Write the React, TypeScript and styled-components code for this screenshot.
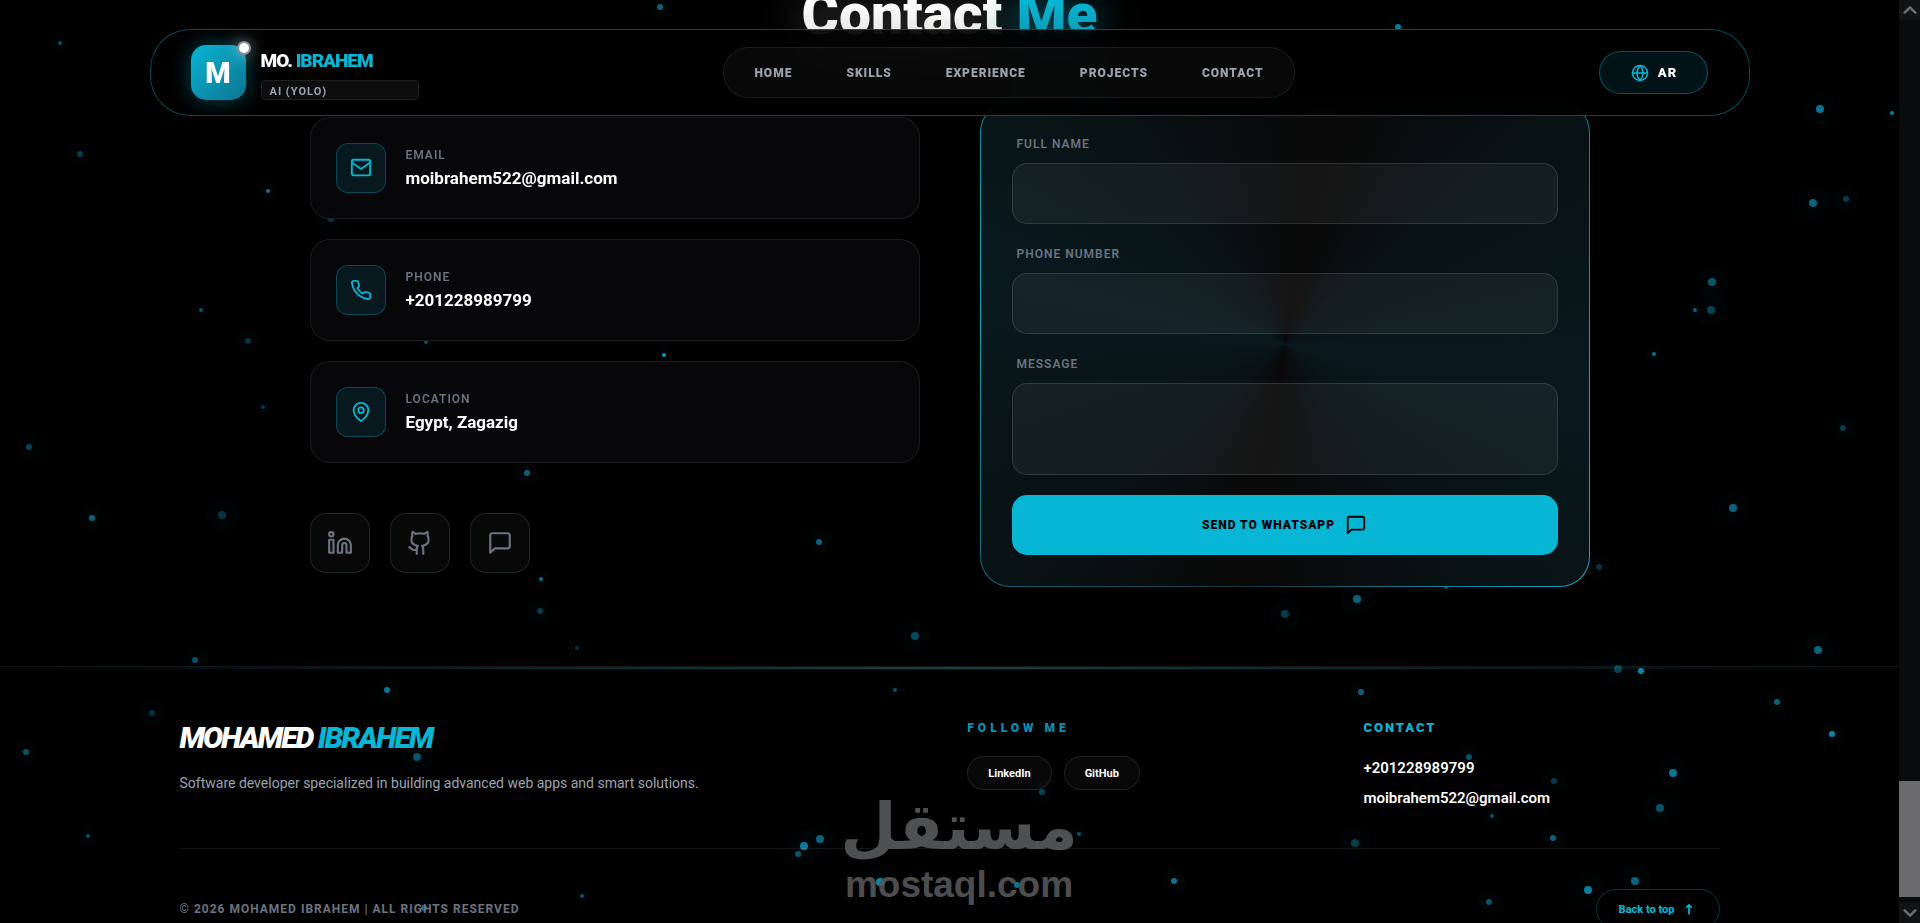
import React from 'react';
import styled, { createGlobalStyle } from 'styled-components';

const cyan = '#06b6d4';
const line = 'rgba(255, 255, 255, 0.08)';

const GlobalStyle = createGlobalStyle`
  *, *::before, *::after { box-sizing: border-box; }
  body {
    margin: 0;
    background: #000;
    color: #fff;
    font-family: Roboto, "Noto Sans", sans-serif;
    -webkit-font-smoothing: antialiased;
  }
  a { color: inherit; text-decoration: none; }
  h2, h3, p { margin: 0; }
`;

const Shell = styled.div`
  height: 100vh;
  display: grid;
  grid-template-columns: minmax(0, 1fr) 21px;
  overflow: hidden;
`;

const Page = styled.div`
  position: relative;
  height: 100vh;
  overflow: hidden;
`;

const Particles = styled.svg`
  position: absolute;
  top: 0;
  left: 0;
  pointer-events: none;
`;

/* navigation */
const Nav = styled.header`
  position: absolute;
  z-index: 2;
  top: 29px;
  left: 0;
  right: 0;
  width: calc(100% - 40px);
  max-width: 1600px;
  margin: 0 auto;
  padding: 15px 40px;
  display: flex;
  align-items: center;
  justify-content: space-between;
  border: 1px solid rgba(6, 182, 212, 0.4);
  border-radius: 40px;
  background: rgba(0, 0, 0, 0.85);
  backdrop-filter: blur(20px);
`;

const Brand = styled.a`
  display: flex;
  gap: 15px;
`;

const Mark = styled.span`
  position: relative;
  width: 55px;
  height: 55px;
  display: grid;
  place-items: center;
  border-radius: 15px;
  background: linear-gradient(135deg, ${cyan}, #0e7490);
  box-shadow: 0 0 20px rgba(6, 182, 212, 0.4);
  font-size: 29px;
  font-weight: 900;
`;

const Status = styled.span`
  position: absolute;
  top: -4px;
  right: -5px;
  width: 14px;
  height: 14px;
  border: 2px solid #8b8b9b;
  border-radius: 50%;
  background: #fff;
  box-shadow: 0 0 15px rgba(255, 255, 255, 0.5);
`;

const BrandText = styled.span`
  width: 158px;
  display: flex;
  flex-direction: column;
  justify-content: space-between;
`;

const BrandName = styled.span`
  padding-top: 4px;
  font-size: 19px;
  line-height: 24px;
  font-weight: 900;
  letter-spacing: -1px;
`;

const Accent = styled.span`
  color: ${cyan};
`;

const Role = styled.span`
  height: 20px;
  padding: 4px 8px 0;
  border: 1px solid ${line};
  border-radius: 5px;
  background: rgba(255, 255, 255, 0.05);
  color: #9ca3af;
  font-size: 11px;
  line-height: 14px;
  font-weight: 700;
  letter-spacing: 1px;
`;

const Menu = styled.nav`
  height: 51px;
  padding: 0 30px;
  display: flex;
  align-items: center;
  gap: 54px;
  border: 1px solid ${line};
  border-radius: 26px;
  background: rgba(255, 255, 255, 0.03);
`;

const MenuLink = styled.a`
  color: #9ca3af;
  font-size: 12px;
  font-weight: 900;
  letter-spacing: 1px;
`;

const Language = styled.button`
  width: 109px;
  height: 43px;
  display: flex;
  align-items: center;
  justify-content: center;
  gap: 9px;
  border: 1px solid rgba(6, 182, 212, 0.4);
  border-radius: 22px;
  background: rgba(6, 182, 212, 0.1);
  color: #fff;
  font: 900 13px Roboto, sans-serif;
  letter-spacing: 1px;
  svg { color: ${cyan}; }
`;

/* contact section */
const Contact = styled.main`
  position: relative;
  width: calc(100% - 40px);
  max-width: 1280px;
  margin: -25px auto 0;
`;

const Title = styled.h2`
  height: 127px;
  font-size: 57px;
  line-height: 80px;
  font-weight: 900;
  text-align: center;
`;

const TitleWord = styled.span<{ $glow: string; $from: string; $to: string }>`
  background: linear-gradient(180deg, ${p => p.$from} 30%, ${p => p.$to} 80%);
  background-clip: text;
  color: transparent;
  filter: drop-shadow(0 8px 20px ${p => p.$glow});
`;

const Columns = styled.div`
  display: grid;
  grid-template-columns: 1fr 1fr;
  align-items: center;
  gap: 60px;
`;

const Info = styled.div`
  display: flex;
  flex-direction: column;
  gap: 20px;
`;

const InfoCard = styled.div`
  height: 102px;
  padding: 0 25px;
  display: flex;
  align-items: center;
  gap: 20px;
  border: 1px solid ${line};
  border-radius: 20px;
  background: rgba(8, 8, 10, 0.9);
  backdrop-filter: blur(10px);
`;

const IconBox = styled.span`
  width: 50px;
  height: 50px;
  display: grid;
  place-items: center;
  border: 1px solid rgba(6, 182, 212, 0.3);
  border-radius: 12px;
  background: rgba(6, 182, 212, 0.1);
  color: ${cyan};
`;

const InfoLabel = styled.p`
  color: #6b7280;
  font-size: 12px;
  line-height: 20px;
  font-weight: 600;
  letter-spacing: 1px;
`;

const InfoValue = styled.p`
  font-size: 17px;
  line-height: 26px;
  font-weight: 700;
`;

const Socials = styled.div`
  display: flex;
  gap: 20px;
  margin-top: 30px;
`;

const SocialLink = styled.a`
  width: 60px;
  height: 60px;
  display: grid;
  place-items: center;
  border: 1px solid rgba(160, 220, 230, 0.14);
  border-radius: 16px;
  background: rgba(255, 255, 255, 0.03);
  color: #6b7280;
`;

const Form = styled.form`
  padding: 31px;
  display: flex;
  flex-direction: column;
  gap: 20px;
  border: 1px solid transparent;
  border-radius: 30px;
  background:
    conic-gradient(from 8deg, #090909, #090a0a 12deg, #081012 35deg, #08191e 90deg, #081518 115deg, #090c0d 160deg, #090909 180deg, #090a0a 192deg, #081012 215deg, #08191e 275deg, #081518 300deg, #090c0d 340deg, #090909) padding-box,
    conic-gradient(from 8deg, #164e5a, #0ea5c4 90deg, #0ea5c4 120deg, #12343c 180deg, #164e5a 210deg, #0ea5c4 270deg, #164e5a) border-box;
`;

const Field = styled.div`
  display: flex;
  flex-direction: column;
  gap: 9px;
`;

const FieldLabel = styled.label`
  padding-left: 5px;
  color: #6b7280;
  font-size: 12px;
  line-height: 20px;
  font-weight: 600;
  letter-spacing: 1px;
`;

const Input = styled.input`
  width: 100%;
  height: 61px;
  padding: 0 20px;
  border: 1px solid rgba(255, 255, 255, 0.12);
  border-radius: 15px;
  background: rgba(255, 255, 255, 0.05);
  color: #fff;
  font: 400 16px Roboto, sans-serif;
`;

const TextArea = styled(Input)`
  height: 92px;
  padding: 18px 20px;
  resize: none;
  display: block;
`;

const Submit = styled.button`
  height: 60px;
  display: flex;
  align-items: center;
  justify-content: center;
  gap: 10px;
  border: 0;
  border-radius: 15px;
  background: ${cyan};
  color: #000;
  font: 900 12px Roboto, sans-serif;
  letter-spacing: 1px;
`;

/* footer */
const Footer = styled.footer`
  position: relative;
  margin-top: 79px;
  border-top: 1px solid ${line};
`;

const GlowLine = styled.div`
  height: 2px;
  background: linear-gradient(90deg, transparent, rgba(6, 182, 212, 0.4), transparent);
`;

const FooterInner = styled.div`
  width: calc(100% - 40px);
  max-width: 1540px;
  margin: 0 auto;
  padding-top: 47px;
`;

const FooterGrid = styled.div`
  height: 132px;
  display: grid;
  grid-template-columns: 21fr 10fr 10fr;
  column-gap: 40px;
`;

const FooterName = styled.h3`
  font-size: 30px;
  line-height: 44px;
  font-weight: 900;
  font-style: italic;
  letter-spacing: -2px;
`;

const FooterText = styled.p`
  margin-top: 11px;
  color: #9ca3af;
  font-size: 14px;
  line-height: 24px;
`;

const FooterHeading = styled.h3<{ $wide?: boolean }>`
  margin-bottom: ${p => (p.$wide ? 16 : 18)}px;
  color: ${p => (p.$wide ? '#0891b2' : cyan)};
  font-size: ${p => (p.$wide ? 12 : 13)}px;
  line-height: 24px;
  font-weight: 900;
  letter-spacing: ${p => (p.$wide ? 4 : 2)}px;
`;

const Pills = styled.div`
  display: flex;
  gap: 12px;
`;

const Pill = styled.a`
  height: 34px;
  padding: 0 20px;
  display: flex;
  align-items: center;
  border: 1px solid rgba(255, 255, 255, 0.1);
  border-radius: 17px;
  background: rgba(255, 255, 255, 0.03);
  font-size: 11px;
  font-weight: 700;
`;

const FooterLink = styled.a`
  display: block;
  margin-bottom: 10px;
  font-size: 15px;
  line-height: 20px;
  font-weight: 600;
`;

const FooterBottom = styled.div`
  padding-top: 40px;
  display: flex;
  justify-content: space-between;
  align-items: center;
  border-top: 1px solid ${line};
`;

const Copyright = styled.p`
  color: #6b7280;
  font-size: 12px;
  font-weight: 700;
  letter-spacing: 1px;
`;

const BackToTop = styled.button`
  width: 124px;
  height: 40px;
  display: flex;
  align-items: center;
  justify-content: center;
  gap: 8px;
  border: 1px solid rgba(6, 182, 212, 0.3);
  border-radius: 20px;
  background: transparent;
  color: ${cyan};
  font: 800 11px Roboto, sans-serif;
`;

const Watermark = styled.div`
  position: absolute;
  z-index: 3;
  left: 0;
  right: 0;
  top: 789px;
  padding-left: 19px;
  color: rgba(88, 89, 91, 0.9);
  text-align: center;
  pointer-events: none;
`;

const WatermarkArabic = styled.div`
  font: 700 65px/76px "DejaVu Sans", sans-serif;
`;

const WatermarkLatin = styled.div`
  font: 700 37px/40px "Liberation Sans", sans-serif;
`;

/* scroll bar */
const ScrollTrack = styled.div`
  display: flex;
  flex-direction: column;
  background: #0a0b0d;
`;

const ScrollArrow = styled.span`
  height: 20px;
  display: grid;
  place-items: center;
  background: #101214;
  color: #6b6b6d;
`;

const ScrollSpace = styled.span<{ $grow: number }>`
  flex: ${p => p.$grow} 1 0;
`;

const ScrollThumb = styled.span`
  height: 116px;
  background: #6b6b6d;
`;

type IconProps = { size: number; children: React.ReactNode; width?: number };
const Icon = ({ size, children, width = 2 }: IconProps) => (
  <svg width={size} height={size} viewBox="0 0 24 24" fill="none" stroke="currentColor" strokeWidth={width} strokeLinecap="round" strokeLinejoin="round" aria-hidden="true">
    {children}
  </svg>
);

const MessageShape = <path d="M21 15a2 2 0 0 1-2 2H7l-4 4V5a2 2 0 0 1 2-2h14a2 2 0 0 1 2 2z" />;

const dots: [number, number, number, number][] = [
  [60, 43, 2, 0.5], [660, 7, 3, 0.6], [1398, 27, 3, 0.75], [80, 154, 3, 0.35], [268, 191, 2, 0.7],
  [331, 218, 4, 0.3], [1820, 109, 4, 0.7], [1892, 113, 2, 0.75], [1813, 203, 4, 0.6], [1846, 199, 3, 0.35],
  [1712, 282, 4, 0.5], [1695, 310, 2, 0.6], [1711, 310, 4, 0.4], [1654, 354, 2, 0.7], [201, 310, 2, 0.5],
  [248, 341, 3, 0.3], [426, 342, 2, 0.5], [664, 355, 2, 0.9], [263, 407, 2, 0.35], [29, 447, 3, 0.4],
  [527, 473, 3, 0.6], [1843, 428, 3, 0.35], [1733, 508, 4, 0.6], [92, 518, 3, 0.6], [222, 515, 4, 0.3],
  [819, 542, 3, 0.6], [541, 579, 2, 0.7], [540, 611, 3, 0.35], [577, 648, 2, 0.3], [915, 636, 4, 0.45],
  [1357, 599, 4, 0.6], [1446, 587, 2, 0.6], [1285, 614, 4, 0.35], [1599, 567, 3, 0.3], [1818, 650, 4, 0.6],
  [1618, 669, 4, 0.4], [1641, 671, 3, 0.8], [195, 660, 3, 0.5], [387, 690, 3, 0.7], [152, 713, 3, 0.3],
  [895, 690, 2, 0.5], [1361, 692, 3, 0.6], [1777, 702, 3, 0.6], [1832, 734, 3, 0.8], [26, 752, 3, 0.5],
  [417, 757, 4, 0.5], [88, 836, 2, 0.5], [1042, 792, 3, 0.4], [1469, 757, 3, 0.5], [1554, 781, 3, 0.35],
  [1673, 773, 4, 0.7], [1660, 808, 4, 0.5], [1492, 816, 2, 0.5], [1355, 843, 4, 0.35], [1553, 838, 3, 0.6],
  [804, 846, 4, 0.75], [820, 839, 4, 0.6], [798, 854, 3, 0.5], [1079, 834, 2, 0.5], [880, 882, 4, 0.8],
  [1017, 885, 3, 0.7], [1174, 881, 3, 0.7], [1588, 890, 4, 0.75], [1635, 881, 4, 0.6], [1489, 902, 3, 0.5],
  [582, 896, 2, 0.5], [424, 908, 3, 0.7],
];

const contacts = [
  { label: 'EMAIL', value: 'moibrahem522@gmail.com', icon: <><rect x="2" y="3" width="20" height="17" rx="2" /><path d="m22 6-10 7L2 6" /></> },
  { label: 'PHONE', value: '+201228989799', icon: <path d="M22 16.92v3a2 2 0 0 1-2.18 2 19.79 19.79 0 0 1-8.63-3.07 19.5 19.5 0 0 1-6-6 19.79 19.79 0 0 1-3.07-8.67A2 2 0 0 1 4.11 2h3a2 2 0 0 1 2 1.72 12.84 12.84 0 0 0 .7 2.81 2 2 0 0 1-.45 2.11L8.09 9.91a16 16 0 0 0 6 6l1.27-1.27a2 2 0 0 1 2.11-.45 12.84 12.84 0 0 0 2.81.7A2 2 0 0 1 22 16.92z" /> },
  { label: 'LOCATION', value: 'Egypt, Zagazig', icon: <><path d="M20 10c0 6-8 12-8 12s-8-6-8-12a8 8 0 0 1 16 0Z" /><circle cx="12" cy="10" r="3" /></> },
];

const socials = [
  { name: 'LinkedIn', icon: <><path d="M16 8a6 6 0 0 1 6 6v7h-4v-7a2 2 0 0 0-4 0v7h-4v-7a6 6 0 0 1 6-6z" /><rect x="2" y="9" width="4" height="12" /><circle cx="4" cy="4" r="2" /></> },
  { name: 'GitHub', icon: <><path d="M15 22v-4a4.8 4.8 0 0 0-1-3.5c3 0 6-2 6-5.5.08-1.25-.27-2.48-1-3.5.28-1.15.28-2.35 0-3.5 0 0-1 0-3 1.5-2.64-.5-5.36-.5-8 0C6 2 5 2 5 2c-.3 1.15-.3 2.35 0 3.5A5.403 5.403 0 0 0 4 9c0 3.5 3 5.5 6 5.5-.39.49-.68 1.05-.85 1.65-.17.6-.22 1.23-.15 1.85v4" /><path d="M9 18c-4.51 2-5-2-7-2" /></> },
  { name: 'WhatsApp', icon: MessageShape },
];

export default function App() {
  return (
    <>
      <GlobalStyle />
      <Shell>
        <Page>
          <Particles width="1900" height="923" aria-hidden="true">
            {dots.map(([x, y, r, o]) => (
              <g key={`${x}-${y}`} fill="#0ea5d0">
                <circle cx={x} cy={y} r={r * 4} opacity={0.02} />
                <circle cx={x} cy={y} r={r} opacity={o} />
              </g>
            ))}
          </Particles>
          <Nav>
            <Brand href="#home">
              <Mark>M<Status /></Mark>
              <BrandText>
                <BrandName>MO. <Accent>IBRAHEM</Accent></BrandName>
                <Role>AI (YOLO)</Role>
              </BrandText>
            </Brand>
            <Menu>
              {['HOME', 'SKILLS', 'EXPERIENCE', 'PROJECTS', 'CONTACT'].map(item => (
                <MenuLink key={item} href={`#${item.toLowerCase()}`}>{item}</MenuLink>
              ))}
            </Menu>
            <Language type="button">
              <Icon size={18}>
                <circle cx="12" cy="12" r="10" />
                <path d="M12 2a14.5 14.5 0 0 0 0 20 14.5 14.5 0 0 0 0-20" />
                <path d="M2 12h20" />
              </Icon>
              AR
            </Language>
          </Nav>
          <Contact id="contact">
            <Title>
              <TitleWord $from="#fff" $to="#e5e7e4" $glow="rgba(255, 255, 255, 0.3)">Contact</TitleWord>{' '}
              <TitleWord $from={cyan} $to="#0e9ab8" $glow="rgba(6, 182, 212, 0.7)">Me</TitleWord>
            </Title>
            <Columns>
              <Info>
                {contacts.map(c => (
                  <InfoCard key={c.label}>
                    <IconBox><Icon size={22}>{c.icon}</Icon></IconBox>
                    <div>
                      <InfoLabel>{c.label}</InfoLabel>
                      <InfoValue>{c.value}</InfoValue>
                    </div>
                  </InfoCard>
                ))}
                <Socials>
                  {socials.map(s => (
                    <SocialLink key={s.name} href="#contact" aria-label={s.name}><Icon size={26}>{s.icon}</Icon></SocialLink>
                  ))}
                </Socials>
              </Info>
              <Form>
                <Field>
                  <FieldLabel htmlFor="name">FULL NAME</FieldLabel>
                  <Input id="name" />
                </Field>
                <Field>
                  <FieldLabel htmlFor="phone">PHONE NUMBER</FieldLabel>
                  <Input id="phone" type="tel" />
                </Field>
                <Field>
                  <FieldLabel htmlFor="message">MESSAGE</FieldLabel>
                  <TextArea as="textarea" id="message" />
                </Field>
                <Submit type="button">SEND TO WHATSAPP <Icon size={22}>{MessageShape}</Icon></Submit>
              </Form>
            </Columns>
          </Contact>
          <Footer>
            <GlowLine />
            <FooterInner>
              <FooterGrid>
                <div>
                  <FooterName>MOHAMED <Accent>IBRAHEM</Accent></FooterName>
                  <FooterText>Software developer specialized in building advanced web apps and smart solutions.</FooterText>
                </div>
                <div>
                  <FooterHeading $wide>FOLLOW ME</FooterHeading>
                  <Pills>
                    <Pill href="#linkedin">LinkedIn</Pill>
                    <Pill href="#github">GitHub</Pill>
                  </Pills>
                </div>
                <div>
                  <FooterHeading>CONTACT</FooterHeading>
                  <FooterLink href="tel:+201228989799">+201228989799</FooterLink>
                  <FooterLink href="mailto:moibrahem522@gmail.com">moibrahem522@gmail.com</FooterLink>
                </div>
              </FooterGrid>
              <FooterBottom>
                <Copyright>© 2026 MOHAMED IBRAHEM | ALL RIGHTS RESERVED</Copyright>
                <BackToTop type="button">
                  Back to top
                  <Icon size={14} width={3}><path d="M12 20V5M8 9l4-4 4 4" /></Icon>
                </BackToTop>
              </FooterBottom>
            </FooterInner>
          </Footer>
          <Watermark>
            <WatermarkArabic lang="ar">مستقل</WatermarkArabic>
            <WatermarkLatin>mostaql.com</WatermarkLatin>
          </Watermark>
        </Page>
        <ScrollTrack aria-hidden="true">
          <ScrollArrow><Icon size={16} width={4}><path d="m4 16 8-8 8 8" /></Icon></ScrollArrow>
          <ScrollSpace $grow={761} />
          <ScrollThumb />
          <ScrollSpace $grow={6} />
          <ScrollArrow><Icon size={16} width={4}><path d="m4 8 8 8 8-8" /></Icon></ScrollArrow>
        </ScrollTrack>
      </Shell>
    </>
  );
}
